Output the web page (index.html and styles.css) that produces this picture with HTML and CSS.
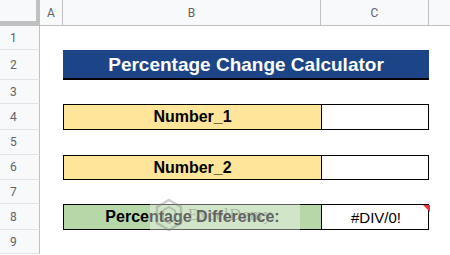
FILE: index.html
```html
<!DOCTYPE html>
<html lang="en">

<head>
  <meta charset="UTF-8">
  <title>Percentage Change Calculator</title>
  <link rel="stylesheet" href="styles.css">
</head>

<body>
  <div class="sheet">
    <div class="corner"></div>
    <div class="col-head">A</div>
    <div class="col-head">B</div>
    <div class="col-head">C</div>
    <div class="col-head last"></div>

    <div class="row-head">1</div>
    <div class="row-body"></div>

    <div class="row-head">2</div>
    <div class="row-body">
      <div class="title">Percentage Change Calculator</div>
    </div>

    <div class="row-head">3</div>
    <div class="row-body"></div>

    <div class="row-head">4</div>
    <div class="row-body">
      <div class="field">
        <div class="label yellow">Number_1</div>
        <div class="value"></div>
      </div>
    </div>

    <div class="row-head">5</div>
    <div class="row-body"></div>

    <div class="row-head">6</div>
    <div class="row-body">
      <div class="field">
        <div class="label yellow">Number_2</div>
        <div class="value"></div>
      </div>
    </div>

    <div class="row-head">7</div>
    <div class="row-body"></div>

    <div class="row-head">8</div>
    <div class="row-body">
      <div class="field">
        <div class="label green">Percentage Difference:</div>
        <div class="value error">#DIV/0!</div>
      </div>
    </div>

    <div class="row-head">9</div>
    <div class="row-body"></div>
  </div>

  <div class="watermark">
    <svg width="30" height="34" viewBox="0 0 30 34">
      <path d="M15 2 L27 9 L27 25 L15 32 L3 25 L3 9 Z" fill="none" stroke="#8a8a8a" stroke-width="2.5"/>
      <path d="M15 9 L21 12.5 L21 21.5 L15 25 L9 21.5 L9 12.5 Z" fill="none" stroke="#8a8a8a" stroke-width="2"/>
    </svg>
    <span>ExcelDemy</span>
  </div>
</body>

</html>
```

FILE: styles.css
```css
* {
  margin: 0;
  box-sizing: border-box;
}

body {
  background: #fff;
  font-family: 'Liberation Sans', Arial, sans-serif;
  width: 450px;
  height: 255px;
  overflow: hidden;
  position: relative;
}

.sheet {
  display: grid;
  grid-template-columns: 40px 1fr;
  grid-template-rows: 26px 24px 30px 24px 26px 25px 25px 24px 26px 24px;
}

.corner {
  grid-column: 1;
  background: #f8f9fa;
  border-right: 5px solid #c0c0c0;
  border-bottom: 5px solid #c0c0c0;
  margin-right: -1px;
}

.col-head {
  background: #f8f9fa;
  border-bottom: 1px solid #c0c0c0;
  border-right: 1px solid #c0c0c0;
  color: #5f6368;
  font-family: Roboto, 'Liberation Sans', sans-serif;
  font-size: 12px;
  display: flex;
  align-items: center;
  justify-content: center;
}

.sheet {
  grid-template-columns: 40px 23px 258px 108px 1fr;
}

.col-head.last {
  border-right: none;
}

.row-head {
  grid-column: 1;
  background: #f8f9fa;
  border-right: 1px solid #c0c0c0;
  border-bottom: 1px solid #e2e3e3;
  color: #5f6368;
  font-family: Roboto, 'Liberation Sans', sans-serif;
  font-size: 12px;
  display: flex;
  align-items: center;
  padding-left: 10px;
}

.row-body {
  grid-column: 2 / 6;
  display: grid;
  grid-template-columns: 23px 366px 1fr;
}

.title {
  grid-column: 2;
  background: #1c4587;
  border-bottom: 2px solid #000;
  color: #fff;
  font-weight: 700;
  font-size: 19px;
  display: flex;
  align-items: center;
  justify-content: center;
  padding-top: 1px;
}

.field {
  grid-column: 2;
  display: grid;
  grid-template-columns: 258px 108px;
  border: 1px solid #000;
}

.label {
  border-right: 1px solid #000;
  font-weight: 700;
  font-size: 16px;
  display: flex;
  align-items: center;
  justify-content: center;
  color: #000;
}

.yellow {
  background: #ffe599;
}

.green {
  background: #b6d7a8;
}

.value {
  display: flex;
  align-items: center;
  justify-content: center;
  font-size: 15px;
  color: #000;
}

.error {
  position: relative;
}

.error::after {
  content: '';
  position: absolute;
  top: 0;
  right: 0;
  border-top: 7px solid #e53935;
  border-left: 7px solid transparent;
}

.watermark {
  position: absolute;
  left: 150px;
  top: 196px;
  width: 150px;
  height: 38px;
  background: rgba(255, 255, 255, 0.42);
  display: flex;
  align-items: center;
  gap: 4px;
  padding-left: 4px;
  opacity: 0.9;
}

.watermark svg {
  opacity: 0.45;
}

.watermark span {
  font-family: 'Liberation Serif', serif;
  font-size: 16px;
  color: rgba(120, 120, 120, 0.5);
  letter-spacing: 1px;
}
```
